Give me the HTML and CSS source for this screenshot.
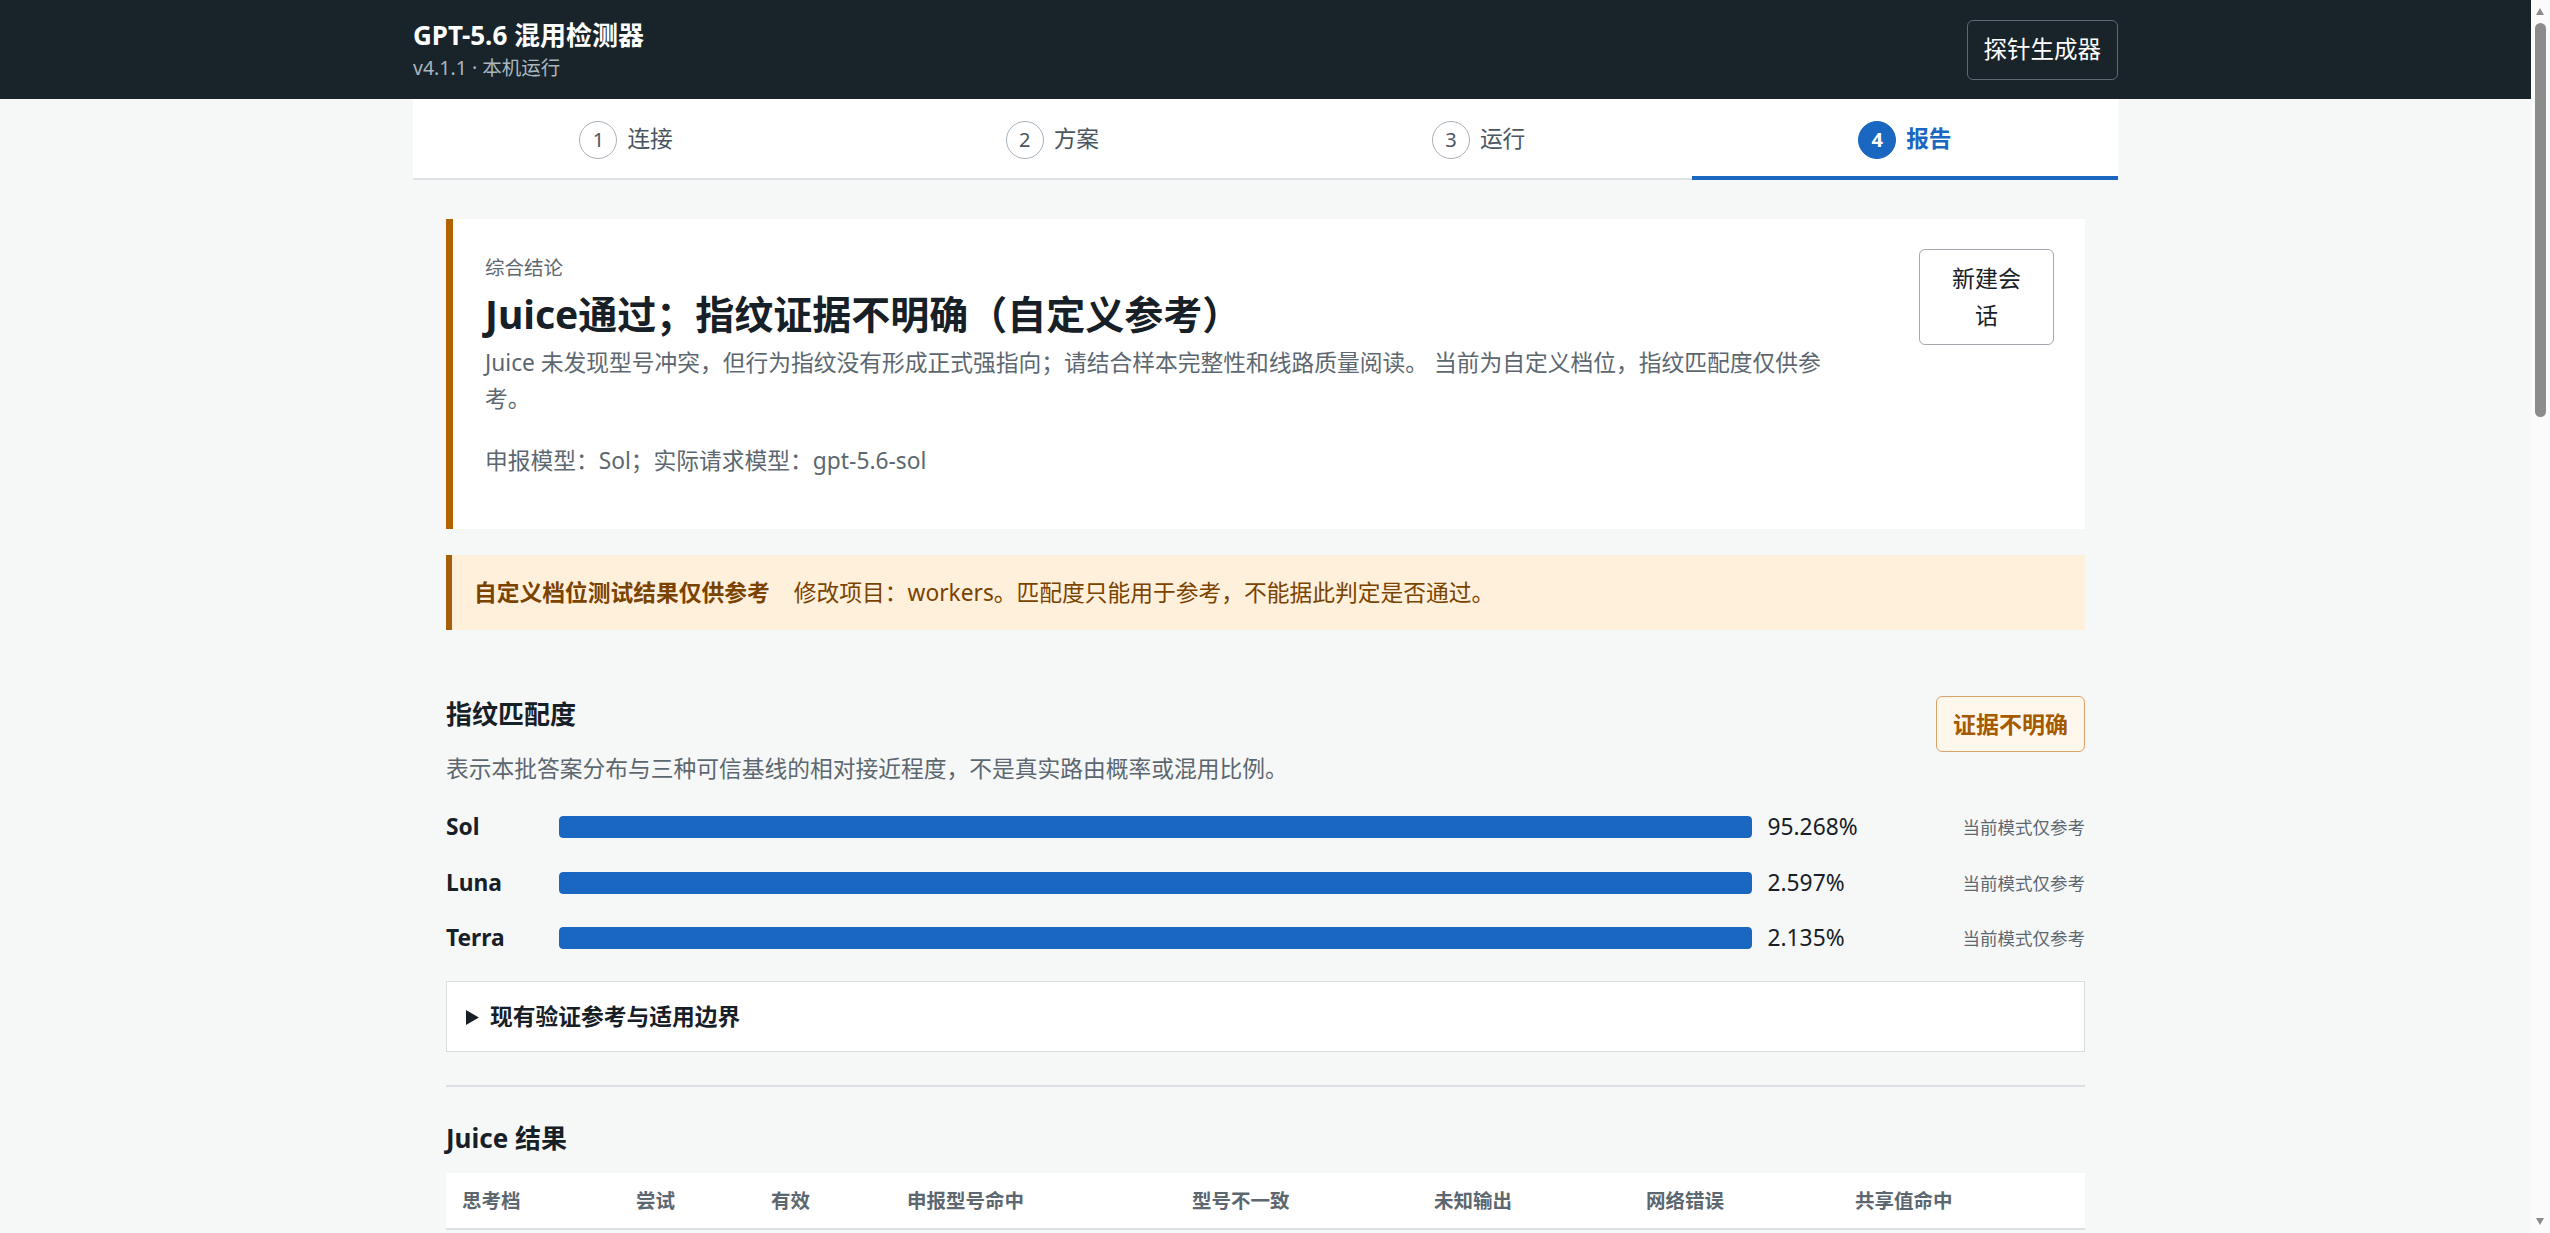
FILE: index.html
```html
<!DOCTYPE html>
<html lang="zh-CN">
<head>
<meta charset="utf-8">
<title>GPT-5.6 混用检测器</title>
<link rel="stylesheet" href="styles.css">
</head>
<body>
<header class="topbar">
  <div class="topbar-inner">
    <div class="brand">
      <div class="brand-title">GPT-5.6 混用检测器</div>
      <div class="brand-sub">v4.1.1 · 本机运行</div>
    </div>
    <button class="btn-dark">探针生成器</button>
  </div>
</header>

<div class="shell">
  <nav class="steps">
    <div class="step"><span class="step-num">1</span><span class="step-label">连接</span></div>
    <div class="step"><span class="step-num">2</span><span class="step-label">方案</span></div>
    <div class="step"><span class="step-num">3</span><span class="step-label">运行</span></div>
    <div class="step active"><span class="step-num">4</span><span class="step-label">报告</span></div>
  </nav>

  <main class="content">
    <section class="verdict">
      <div class="verdict-text">
        <div class="verdict-label">综合结论</div>
        <h1 class="verdict-title">Juice通过；指纹证据不明确（自定义参考）</h1>
        <p class="verdict-desc">Juice 未发现型号冲突，但行为指纹没有形成正式强指向；请结合样本完整性和线路质量阅读。 当前为自定义档位，指纹匹配度仅供参考。</p>
        <p class="verdict-model">申报模型：Sol；实际请求模型：gpt-5.6-sol</p>
      </div>
      <button class="btn-light">新建会话</button>
    </section>

    <div class="notice">
      <strong class="notice-strong">自定义档位测试结果仅供参考</strong><span class="notice-text">修改项目：workers。匹配度只能用于参考，不能据此判定是否通过。</span>
    </div>

    <section class="fingerprint">
      <div class="section-head">
        <div>
          <h2 class="section-title">指纹匹配度</h2>
          <p class="section-desc">表示本批答案分布与三种可信基线的相对接近程度，不是真实路由概率或混用比例。</p>
        </div>
        <span class="badge-warn">证据不明确</span>
      </div>

      <div class="bars">
        <div class="bar-name">Sol</div>
        <div class="bar-track"><div class="bar-fill" style="width:100%"></div></div>
        <div class="bar-value">95.268%</div>
        <div class="bar-note">当前模式仅参考</div>

        <div class="bar-name">Luna</div>
        <div class="bar-track"><div class="bar-fill" style="width:100%"></div></div>
        <div class="bar-value">2.597%</div>
        <div class="bar-note">当前模式仅参考</div>

        <div class="bar-name">Terra</div>
        <div class="bar-track"><div class="bar-fill" style="width:100%"></div></div>
        <div class="bar-value">2.135%</div>
        <div class="bar-note">当前模式仅参考</div>
      </div>

      <details class="refs">
        <summary>现有验证参考与适用边界</summary>
        <p class="refs-body">匹配度基于已有可信基线样本计算，仅反映相对接近程度。</p>
      </details>
    </section>

    <section class="results">
      <h2 class="section-title">Juice 结果</h2>
      <table class="result-table">
        <thead>
          <tr>
            <th class="c1">思考档</th>
            <th class="c2">尝试</th>
            <th class="c3">有效</th>
            <th class="c4">申报型号命中</th>
            <th class="c5">型号不一致</th>
            <th class="c6">未知输出</th>
            <th class="c7">网络错误</th>
            <th class="c8">共享值命中</th>
          </tr>
        </thead>
      </table>
    </section>
  </main>
</div>

<div class="scrollbar" aria-hidden="true">
  <span class="sb-up"></span>
  <span class="sb-thumb"></span>
  <span class="sb-down"></span>
</div>
</body>
</html>
```

FILE: styles.css
```css
* { box-sizing: border-box; }

html, body {
  margin: 0;
  padding: 0;
}

body {
  background: #f6f8f8;
  color: #172026;
  font-family: "Noto Sans", "Noto Sans CJK SC", sans-serif;
  font-size: 22.75px;
  line-height: 1.6;
  padding-right: 19px;
}

button {
  font-family: inherit;
  cursor: pointer;
}

/* ---------- window scrollbar (overlay) ---------- */
.scrollbar {
  position: fixed;
  top: 0;
  right: 0;
  width: 19px;
  height: 100vh;
  background: #fbfbfb;
}

.sb-thumb {
  position: absolute;
  top: 23px;
  left: 4px;
  width: 11px;
  height: 394px;
  border-radius: 6px;
  background: #8c8c8c;
}

.sb-up,
.sb-down {
  position: absolute;
  left: 5px;
  width: 0;
  height: 0;
  border-left: 4.5px solid transparent;
  border-right: 4.5px solid transparent;
}

.sb-up {
  top: 8px;
  border-bottom: 7px solid #8c8c8c;
}

.sb-down {
  bottom: 8px;
  border-top: 7px solid #8c8c8c;
}

/* ---------- top bar ---------- */
.topbar {
  background: #19242a;
  height: 99px;
}

.topbar-inner {
  max-width: 1705px;
  height: 99px;
  margin: 0 auto;
  display: flex;
  align-items: center;
  justify-content: space-between;
}

.brand-title {
  color: #ffffff;
  font-size: 26px;
  font-weight: 700;
  line-height: 34px;
}

.brand-sub {
  color: #a9b6bf;
  font-size: 19.5px;
  line-height: 26px;
  margin-top: 3px;
}

.btn-dark {
  height: 60px;
  padding: 0 16px;
  background: transparent;
  color: #ffffff;
  border: 1px solid #5d6a73;
  border-radius: 6px;
  font-size: 23.5px;
  line-height: 1;
}

/* ---------- shell ---------- */
.shell {
  max-width: 1705px;
  margin: 0 auto;
}

.steps {
  display: grid;
  grid-template-columns: repeat(4, 1fr);
  background: #ffffff;
  box-shadow: inset 0 -2px 0 #dde2e6;
}

.step {
  height: 81px;
  display: flex;
  align-items: center;
  justify-content: center;
  gap: 10px;
  border-bottom: 4px solid transparent;
  padding-top: 4px;
  color: #4a5560;
  font-size: 22.75px;
}

.step-num {
  width: 38px;
  height: 38px;
  border-radius: 50%;
  border: 1.5px solid #aab2b9;
  display: flex;
  align-items: center;
  justify-content: center;
  font-size: 20px;
  line-height: 1;
  color: #4a5560;
}

.step.active {
  border-bottom-color: #1967c1;
  color: #1967c1;
  font-weight: 700;
}

.step.active .step-num {
  background: #1967c1;
  border-color: #1967c1;
  color: #ffffff;
  font-weight: 700;
}

/* ---------- content ---------- */
.content {
  padding: 39px 33px 60px;
}

.verdict {
  display: flex;
  align-items: flex-start;
  gap: 26px;
  background: #ffffff;
  border-left: 7px solid #b36200;
  padding: 30px 31px 50px 32px;
}

.verdict-text {
  flex: 1;
  min-width: 0;
}

.verdict-label {
  color: #5c6770;
  font-size: 19.5px;
  line-height: 38px;
}

.verdict-title {
  margin: 2px 0 0;
  font-size: 39px;
  line-height: 50px;
  font-weight: 700;
  color: #172026;
}

.verdict-desc {
  margin: 6px 0 0;
  max-width: 1348px;
  color: #5c6770;
  line-height: 36px;
}

.verdict-model {
  margin: 26px 0 0;
  color: #5c6770;
  line-height: 36px;
}

.btn-light {
  flex: none;
  width: 135px;
  padding: 10px 24px;
  background: #ffffff;
  color: #172026;
  border: 1px solid #a3a9ae;
  border-radius: 6px;
  font-size: 23px;
  line-height: 37px;
  text-align: center;
}

.notice {
  margin-top: 26px;
  background: #fff0db;
  border-left: 6px solid #a65e0a;
  padding: 19px 22px;
  line-height: 37px;
  color: #7a4300;
}

.notice-strong {
  font-weight: 700;
  margin-right: 24px;
}

/* ---------- fingerprint ---------- */
.fingerprint {
  margin-top: 66px;
}

.section-head {
  display: flex;
  justify-content: space-between;
  align-items: flex-start;
}

.section-title {
  margin: 0;
  font-size: 26px;
  line-height: 36px;
  font-weight: 700;
  color: #172026;
}

.section-desc {
  margin: 19px 0 0;
  color: #5c6770;
  line-height: 36px;
}

.badge-warn {
  display: inline-block;
  height: 56px;
  padding: 9px 16px;
  border: 1px solid #d9a36a;
  border-radius: 6px;
  background: #fff7ec;
  color: #a65a00;
  font-size: 23px;
  font-weight: 700;
  line-height: 36px;
}

.bars {
  margin-top: 22px;
  display: grid;
  grid-template-columns: 97px 1fr 179px auto;
  column-gap: 16px;
  row-gap: 19.5px;
  align-items: center;
}

.bar-name {
  font-weight: 700;
  line-height: 36px;
}

.bar-track {
  height: 22px;
  border-radius: 4px;
  background: #e4e8ec;
  overflow: hidden;
}

.bar-fill {
  height: 100%;
  background: #1967c1;
  border-radius: 4px;
}

.bar-value {
  line-height: 36px;
}

.bar-note {
  color: #5c6770;
  font-size: 17.5px;
  line-height: 36px;
  text-align: right;
}

.refs {
  margin-top: 25px;
  background: #ffffff;
  border: 1px solid #d8dde2;
}

.refs summary {
  padding: 16.5px 19px;
  font-weight: 700;
  line-height: 36px;
  cursor: pointer;
}

.refs-body {
  margin: 0;
  padding: 0 19px 16px;
  color: #5c6770;
}

/* ---------- results ---------- */
.results {
  margin-top: 33px;
  border-top: 2px solid #dcdfe3;
  padding-top: 33px;
}

.result-table {
  margin-top: 17px;
  width: 100%;
  border-collapse: collapse;
  background: #ffffff;
}

.result-table th {
  text-align: left;
  padding: 14px 16px;
  font-size: 19.5px;
  line-height: 27px;
  font-weight: 700;
  color: #5c6770;
  border-bottom: 2px solid #dcdfe3;
}

.c1 { width: 174px; }
.c2 { width: 135px; }
.c3 { width: 136px; }
.c4 { width: 285px; }
.c5 { width: 242px; }
.c6 { width: 212px; }
.c7 { width: 209px; }
.c8 { width: auto; }
```
